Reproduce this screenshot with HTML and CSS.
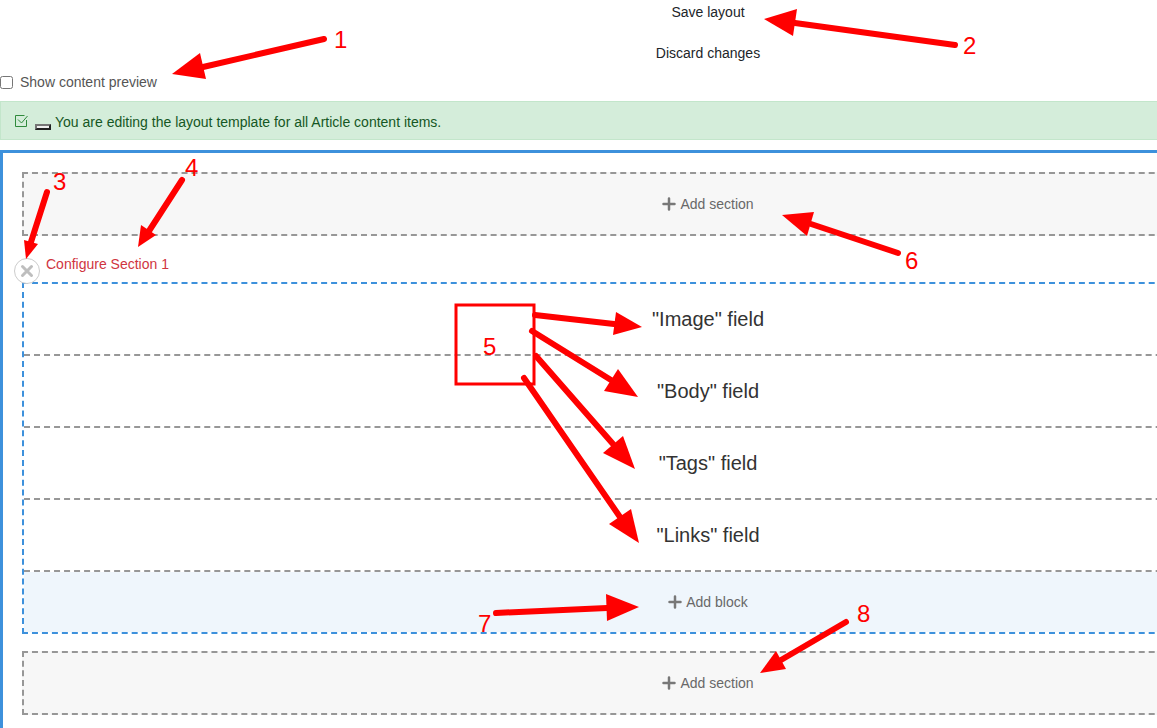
FILE: index.html
```html
<!DOCTYPE html>
<html lang="en">
<head>
<meta charset="utf-8">
<title>Edit layout for Article content items</title>
<link rel="stylesheet" href="styles.css">
</head>
<body>
<main class="page">
  <form class="actions">
    <button class="action" type="button">Save layout</button>
    <button class="action" type="button">Discard changes</button>
    <label class="preview" for="preview"><input class="preview-box" id="preview" type="checkbox">Show content preview</label>
  </form>
  <div class="message">
    <svg class="message-check" viewBox="0 0 14 14" width="14" height="14" aria-hidden="true"><path d="M10.500 1.500H1.500V12.500H12.500V6M4 5.500L7.500 9L13.500 2"/></svg>
    <button class="message-close" type="button" aria-label="Close"></button>
    <span>You are editing the layout template for all Article content items.</span>
  </div>
  <div class="builder">
    <div class="add-section"><a class="add-link" href="#"><svg class="plus" viewBox="0 0 14 14" width="14" height="14" aria-hidden="true"><path d="M7 1.500V12.500M1.500 7H12.500"/></svg>Add section</a></div>
    <div class="section-head">
      <a class="remove" href="#" aria-label="Remove Section 1"><svg class="remove-icon" viewBox="0 0 14 14" width="14" height="14" aria-hidden="true"><path d="M2.500 2.500L11.500 11.500M11.500 2.500L2.500 11.500"/></svg></a>
      <a class="configure" href="#">Configure Section 1</a>
    </div>
    <section class="section">
      <div class="block">"Image" field</div>
      <div class="block">"Body" field</div>
      <div class="block">"Tags" field</div>
      <div class="block">"Links" field</div>
      <div class="add-block"><a class="add-link" href="#"><svg class="plus" viewBox="0 0 14 14" width="14" height="14" aria-hidden="true"><path d="M7 1.500V12.500M1.500 7H12.500"/></svg>Add block</a></div>
    </section>
    <div class="add-section"><a class="add-link" href="#"><svg class="plus" viewBox="0 0 14 14" width="14" height="14" aria-hidden="true"><path d="M7 1.500V12.500M1.500 7H12.500"/></svg>Add section</a></div>
  </div>
</main>
<svg class="notes" width="1157" height="728" viewBox="0 0 1157 728">
  <g class="shafts">
    <path d="M324 39L203 67"/>
    <path d="M955 45L795 23"/>
    <path d="M47 192L31 242"/>
    <path d="M182 180L149 231"/>
    <path d="M535 315L614 324"/>
    <path d="M532 331L611 380"/>
    <path d="M536 356L613 444"/>
    <path d="M524 378L620 517"/>
    <path d="M898 253L811 224"/>
    <path d="M496 613L607 608"/>
    <path d="M846 622L781 660"/>
  </g>
  <g class="heads">
    <path d="M172 74L200 53L206 79Z"/>
    <path d="M764 19L797 9L793 36Z"/>
    <path d="M26 259L24 240L38 244Z"/>
    <path d="M138 247L141 225L156 235Z"/>
    <path d="M642 327L616 312L613 335Z"/>
    <path d="M638 397L618 369L604 391Z"/>
    <path d="M635 469L623 436L603 453Z"/>
    <path d="M639 543L631 509L609 524Z"/>
    <path d="M782 215L814 212L807 236Z"/>
    <path d="M639 607L606 594L607 621Z"/>
    <path d="M760 673L776 651L786 669Z"/>
  </g>
  <rect class="note-box" x="456" y="305" width="78" height="79"/>
  <g class="numbers">
    <text x="334" y="48">1</text>
    <text x="963" y="54">2</text>
    <text x="53" y="190">3</text>
    <text x="185" y="176">4</text>
    <text x="483" y="355">5</text>
    <text x="905" y="269">6</text>
    <text x="478" y="632">7</text>
    <text x="857" y="622">8</text>
  </g>
</svg>
</body>
</html>
```
FILE: styles.css
```css
* {
  box-sizing: border-box;
}

body {
  position: relative;
  margin: 0;
  overflow: hidden;
  background: #fff;
  color: #333;
  font: 14px/20px "Liberation Sans", Arial, sans-serif;
}

a {
  color: inherit;
  text-decoration: none;
}

/* The editing canvas runs past the right side of the window. */
.page {
  margin-right: -259px;
}

.actions {
  display: flex;
  flex-direction: column;
  align-items: center;
  padding-top: 2px;
}

.action {
  margin: 0 0 21px;
  padding: 0;
  border: 0;
  background: none;
  color: #212529;
  font: inherit;
}

.action + .action {
  margin-bottom: 9px;
}

.preview {
  display: flex;
  align-items: center;
  align-self: flex-start;
  gap: 7px;
  color: #555;
}

.preview-box {
  width: 13px;
  height: 13px;
  margin: 0;
}

.message {
  display: flex;
  align-items: center;
  margin-top: 9px;
  padding: 11px 13px 7px;
  border: 1px solid #c3e6cb;
  background: #d4edda;
  color: #155724;
  line-height: 19px;
}

.message-check {
  margin-bottom: 3px;
  fill: none;
  stroke: #2f8a3c;
}

.message-close {
  width: 16px;
  height: 6px;
  margin: 8px 4px 0 7px;
  padding: 0;
  border: 2px solid;
  border-color: #767676 #212121 #212121 #767676;
  background: #efefef;
}

.builder {
  margin-top: 10px;
  padding: 19px;
  border: 3px solid #3d91dc;
}

.add-section,
.add-block {
  display: flex;
  align-items: center;
  justify-content: center;
  padding: 20px 0;
}

.add-section {
  border: 2px dashed #979797;
  background: #f7f7f7;
}

.add-link {
  display: flex;
  align-items: center;
  gap: 4px;
  color: #686868;
}

.plus {
  fill: none;
  stroke: #787878;
  stroke-width: 2.5;
  stroke-linecap: round;
}

.section-head {
  position: relative;
  padding: 18px 24px 8px;
}

.configure {
  color: #d0353f;
}

.remove {
  position: absolute;
  bottom: -2px;
  left: -8px;
  display: flex;
  align-items: center;
  justify-content: center;
  width: 26px;
  height: 26px;
  border: 1px solid #ccc;
  border-radius: 50%;
  background: #fff;
}

.remove-icon {
  fill: none;
  stroke: #bebebe;
  stroke-width: 3;
  stroke-linecap: round;
}

.section {
  margin-bottom: 17px;
  border: 2px dashed #3d91dc;
}

.block {
  padding: 23px 0;
  border-bottom: 2px dashed #979797;
  font-size: 20px;
  line-height: 24px;
  text-align: center;
}

.add-block {
  background: #eff6fc;
}

.notes {
  position: absolute;
  top: 0;
  left: 0;
  pointer-events: none;
}

.shafts {
  fill: none;
  stroke: #f00;
  stroke-width: 6;
  stroke-linecap: round;
}

.heads {
  fill: #f00;
}

.note-box {
  fill: none;
  stroke: #f00;
  stroke-width: 3;
}

.numbers {
  fill: #f00;
  font-size: 24px;
}
```
